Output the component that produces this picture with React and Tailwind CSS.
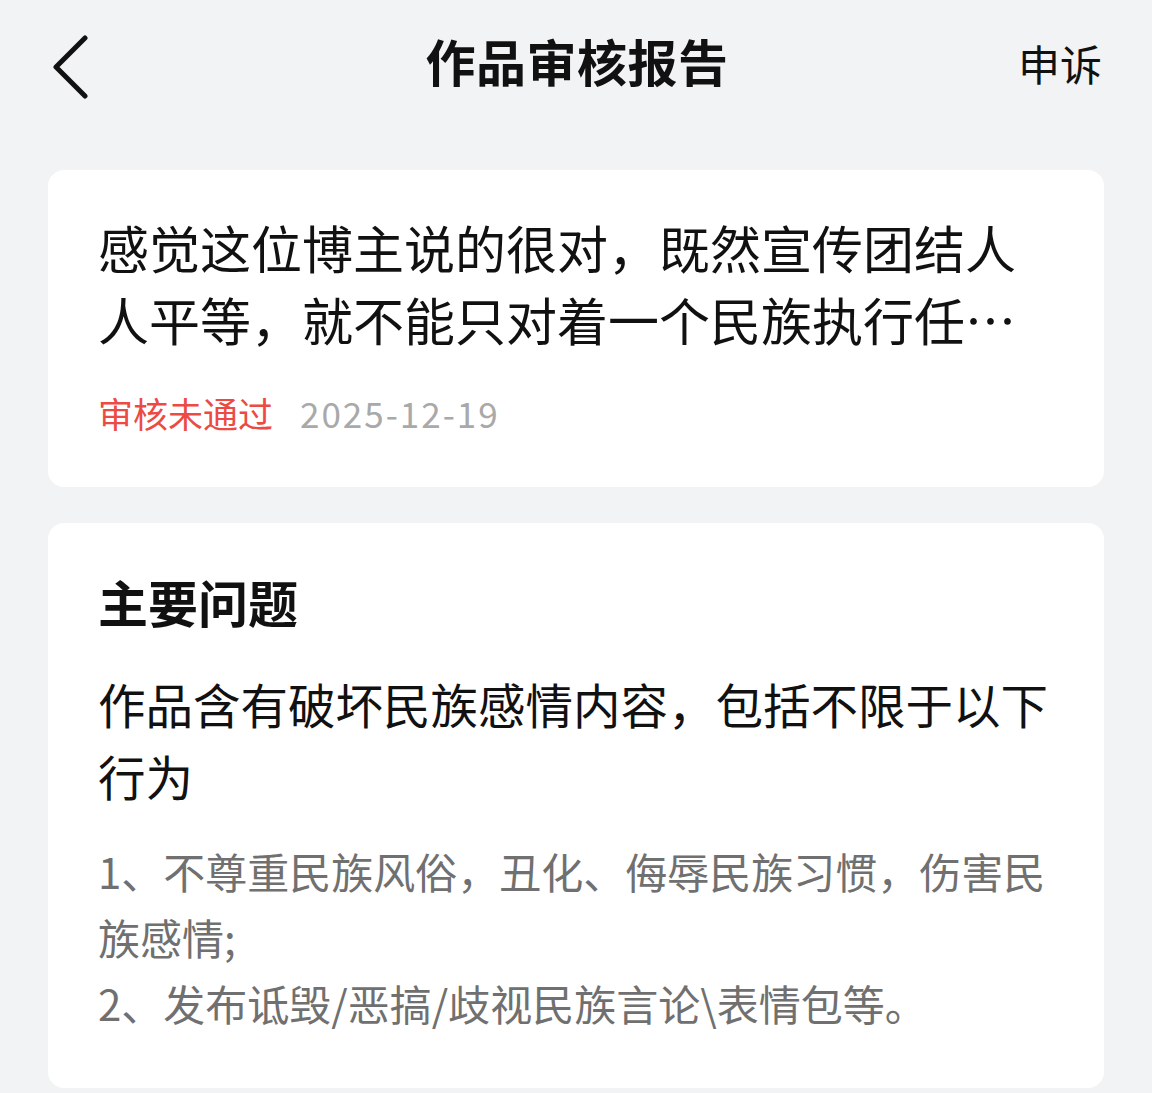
import React from "react";

const App = () => {
  return (
    <div className="min-h-screen bg-[#f2f3f5] font-['Noto_Sans_CJK_SC','Noto_Sans',sans-serif] text-[#111]">
      {/* Header */}
      <div className="grid grid-cols-[1fr_auto_1fr] items-center h-[130px] pl-[52px] pr-[50px]">
        <button className="justify-self-start mt-[4px]">
          <svg width="40" height="64" viewBox="0 0 40 64" fill="none">
            <polyline
              points="33,3 4,32 33,61"
              stroke="#111"
              strokeWidth="5"
              strokeLinecap="round"
              strokeLinejoin="round"
            />
          </svg>
        </button>
        <h1 className="text-[50px] font-bold leading-none tracking-[0.5px] mb-[10px]">
          作品审核报告
        </h1>
        <span className="justify-self-end text-[42px] leading-none mb-[4px]">申诉</span>
      </div>

      <div className="px-[48px] pt-[40px] pb-[6px] space-y-[36px]">
        {/* Work card */}
        <div className="bg-white rounded-[16px] px-[50px] pt-[41px] pb-[49px]">
          <p className="text-[51px] leading-[72px] line-clamp-2">
            感觉这位博主说的很对，既然宣传团结人人平等，就不能只对着一个民族执行任何政策，应该一视同仁
          </p>
          <div className="flex items-center gap-[27px] mt-[32px] text-[35px] leading-[51px]">
            <span className="text-[#ec4a43]">审核未通过</span>
            <span className="text-[#a9a9a9] tracking-[2px]">2025-12-19</span>
          </div>
        </div>

        {/* Problem card */}
        <div className="bg-white rounded-[16px] px-[50px] pt-[42px] pb-[52px]">
          <h2 className="text-[50px] font-bold leading-[72px]">主要问题</h2>
          <p className="mt-[31px] text-[47.5px] leading-[72px]">
            作品含有破坏民族感情内容，包括不限于以下行为
          </p>
          <div className="mt-[26px] text-[42px] leading-[66px] text-[#707070]">
            <p>1、不尊重民族风俗，丑化、侮辱民族习惯，伤害民族感情;</p>
            <p>2、发布诋毁/恶搞/歧视民族言论\表情包等。</p>
          </div>
        </div>
      </div>
    </div>
  );
};

export default App;
